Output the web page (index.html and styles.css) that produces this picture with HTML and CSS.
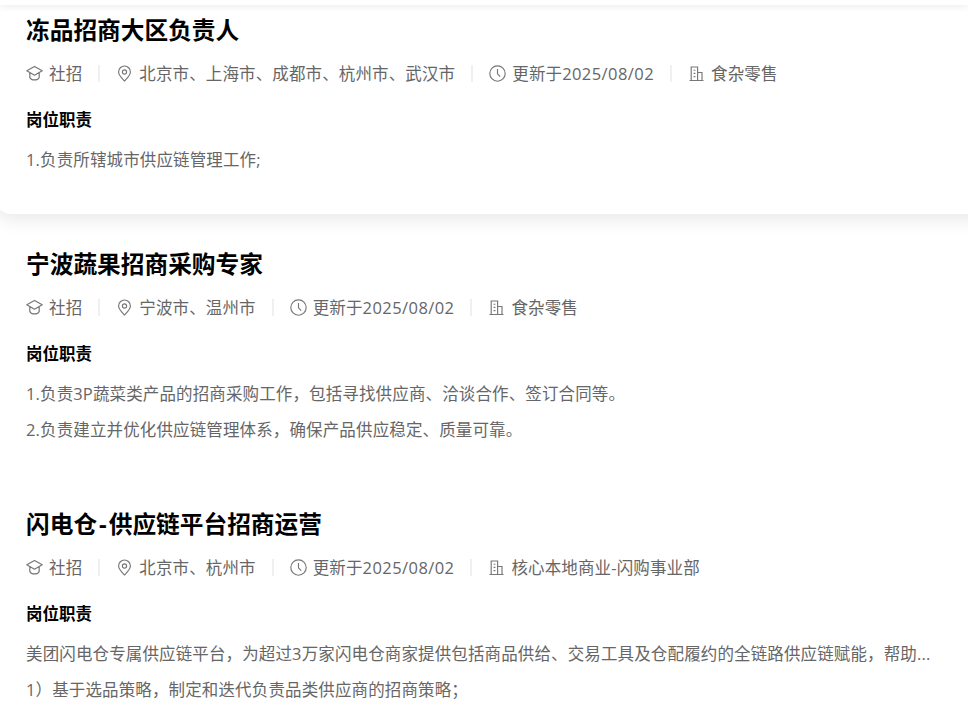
FILE: index.html
```html
<!DOCTYPE html>
<html lang="zh">
<head>
<meta charset="utf-8">
<title>岗位列表</title>
<link rel="stylesheet" href="styles.css">
</head>
<body>
<svg class="defs" width="0" height="0" aria-hidden="true">
  <symbol id="i-cap" viewBox="0 0 17 17"><path d="M8.5 1.4 L16.2 5.8 L8.5 10.2 L0.8 5.8 Z M3.8 7.6 V12.4 C5.4 15.8 11.6 15.8 13.2 12.4 V7.6" fill="none" stroke="currentColor" stroke-width="1.2" stroke-linejoin="round"/></symbol>
  <symbol id="i-pin" viewBox="0 0 17 17"><path d="M8.5 16 C5.4 12.6 2.6 10 2.6 6.9 A5.9 5.9 0 0 1 14.4 6.9 C14.4 10 11.6 12.6 8.5 16 Z" fill="none" stroke="currentColor" stroke-width="1.15" stroke-linejoin="round"/><circle cx="8.5" cy="7" r="2.1" fill="none" stroke="currentColor" stroke-width="1.15"/></symbol>
  <symbol id="i-clock" viewBox="0 0 17 17"><circle cx="8.5" cy="8.5" r="7.7" fill="none" stroke="currentColor" stroke-width="1.15"/><path d="M8.5 4 V8.8 L11.2 11.6" fill="none" stroke="currentColor" stroke-width="1.15"/></symbol>
  <symbol id="i-org" viewBox="0 0 17 17"><path d="M1.5 15.5 H15.5 M3.2 15.5 V2 H9.6 V15.5 M9.6 7.5 H14 V15.5 M5.6 5.2 H7.4 M5.6 8.4 H7.4 M5.6 11.6 H7.4" fill="none" stroke="currentColor" stroke-width="1.15"/></symbol>
</svg>
<header class="top-edge"></header>
<main class="list">
  <article class="job job-raised">
    <h2 class="job-title">冻品招商大区负责人</h2>
    <div class="meta">
      <span class="meta-item"><svg class="icon"><use href="#i-cap"/></svg>社招</span>
      <span class="meta-item"><svg class="icon"><use href="#i-pin"/></svg>北京市、上海市、成都市、杭州市、武汉市</span>
      <span class="meta-item"><svg class="icon"><use href="#i-clock"/></svg><span>更新于<span class="date">2025/08/02</span></span></span>
      <span class="meta-item"><svg class="icon"><use href="#i-org"/></svg>食杂零售</span>
    </div>
    <h3 class="section-title">岗位职责</h3>
    <p class="line">1.负责所辖城市供应链管理工作;</p>
  </article>
  <article class="job">
    <h2 class="job-title">宁波蔬果招商采购专家</h2>
    <div class="meta">
      <span class="meta-item"><svg class="icon"><use href="#i-cap"/></svg>社招</span>
      <span class="meta-item"><svg class="icon"><use href="#i-pin"/></svg>宁波市、温州市</span>
      <span class="meta-item"><svg class="icon"><use href="#i-clock"/></svg><span>更新于<span class="date">2025/08/02</span></span></span>
      <span class="meta-item"><svg class="icon"><use href="#i-org"/></svg>食杂零售</span>
    </div>
    <h3 class="section-title">岗位职责</h3>
    <p class="line">1.负责3P蔬菜类产品的招商采购工作，包括寻找供应商、洽谈合作、签订合同等。</p>
    <p class="line">2.负责建立并优化供应链管理体系，确保产品供应稳定、质量可靠。</p>
  </article>
  <article class="job">
    <h2 class="job-title">闪电仓<span class="dash">-</span>供应链平台招商运营</h2>
    <div class="meta">
      <span class="meta-item"><svg class="icon"><use href="#i-cap"/></svg>社招</span>
      <span class="meta-item"><svg class="icon"><use href="#i-pin"/></svg>北京市、杭州市</span>
      <span class="meta-item"><svg class="icon"><use href="#i-clock"/></svg><span>更新于<span class="date">2025/08/02</span></span></span>
      <span class="meta-item"><svg class="icon"><use href="#i-org"/></svg>核心本地商业-闪购事业部</span>
    </div>
    <h3 class="section-title">岗位职责</h3>
    <p class="line">美团闪电仓专属供应链平台，为超过3万家闪电仓商家提供包括商品供给、交易工具及仓配履约的全链路供应链赋能，帮助...</p>
    <p class="line">1）基于选品策略，制定和迭代负责品类供应商的招商策略；</p>
  </article>
</main>
</body>
</html>
```
FILE: styles.css
```css
* { box-sizing: border-box; }
html, body { margin: 0; height: 723px; overflow: hidden; background: #fff; }
body {
  font-family: "Open Sans", "Noto Sans CJK SC", sans-serif;
  color: #000;
}
.defs { position: absolute; }
.top-edge {
  position: relative;
  z-index: 1;
  height: 5px;
  background: #fff;
  box-shadow: 0 1px 7px rgba(0, 0, 0, .1);
}
.job {
  padding: 0 26px;
  height: 260px;
}
.job-title {
  margin: 0;
  padding-top: 7px;
  font-size: 23.7px;
  line-height: 36px;
  font-weight: 700;
}
.dash { margin: 0 2px; }
.job-raised {
  height: 209px;
  margin: 0 -30px 25px -8px;
  padding-left: 34px;
  border-radius: 0 0 20px 20px;
  background: #fff;
  box-shadow: 0 4px 20px rgba(0, 0, 0, .1);
}
.meta {
  display: flex;
  align-items: center;
  margin-top: 13px;
  height: 24px;
  font-size: 16.5px;
  letter-spacing: .13px;
  color: #666;
}
.meta-item { display: flex; align-items: center; white-space: nowrap; }
.meta-item + .meta-item { margin-left: 16px; padding-left: 18px; position: relative; }
.meta-item + .meta-item::before {
  content: "";
  position: absolute;
  left: 0;
  top: 4px;
  width: 2px;
  height: 17px;
  background: #f0f0f0;
}
.icon { width: 17px; height: 17px; margin-right: 6px; color: #777; flex: none; }
.date { letter-spacing: .43px; }
.section-title {
  margin: 22.5px 0 0;
  font-size: 16.5px;
  line-height: 24px;
  font-weight: 700;
}
.line {
  margin: 16px 0 0;
  font-size: 16.5px;
  line-height: 24px;
  letter-spacing: .13px;
  color: #666;
  white-space: nowrap;
}
.line + .line { margin-top: 12px; }
```
